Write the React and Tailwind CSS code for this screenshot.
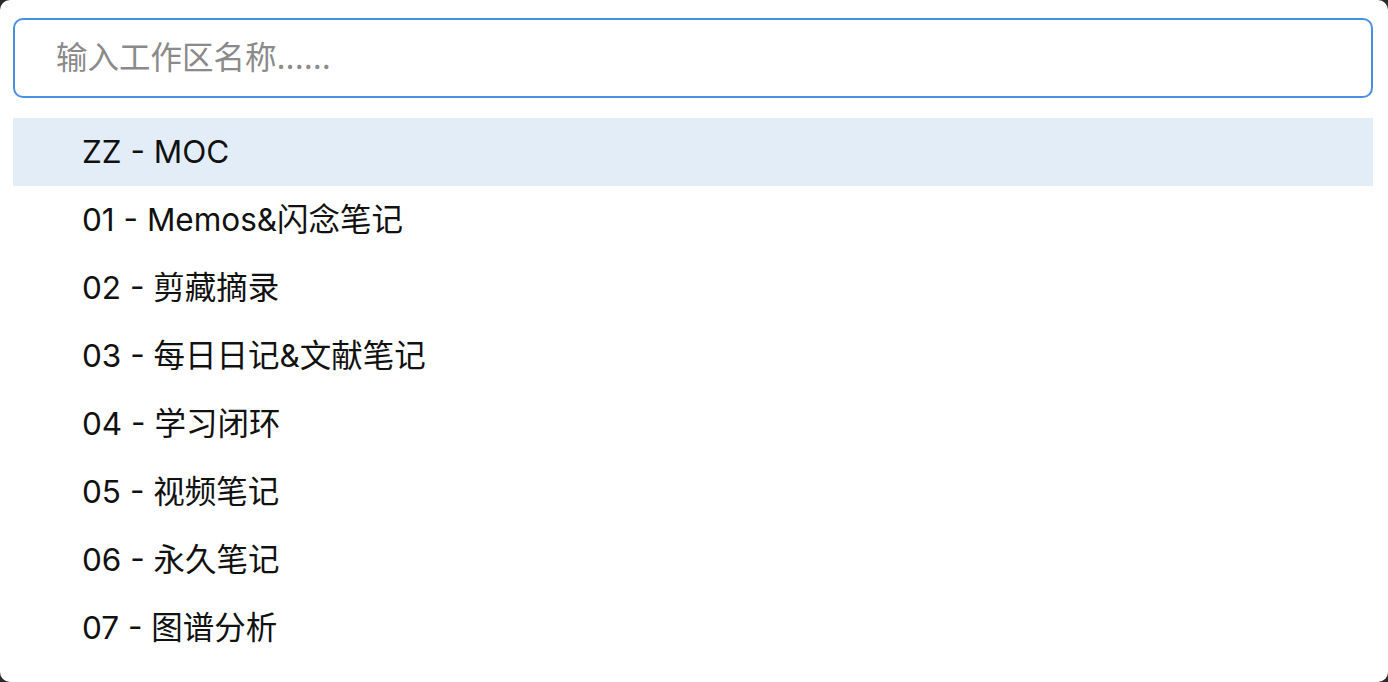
import React from 'react';

const items = [
  'ZZ - MOC',
  '01 - Memos&闪念笔记',
  '02 - 剪藏摘录',
  '03 - 每日日记&文献笔记',
  '04 - 学习闭环',
  '05 - 视频笔记',
  '06 - 永久笔记',
  '07 - 图谱分析',
];

export default function App() {
  return (
    <div className="w-[1388px] h-[682px] bg-[#2b2b2b] overflow-hidden">
      <div
        className="w-full h-full bg-white rounded-[10px] pl-[13px] pr-[15px] pt-[18px]"
        style={{ fontFamily: 'Inter, "Noto Sans CJK SC", sans-serif' }}
      >
        <div className="h-[80px] border-2 border-[#4a90e2] rounded-[10px] flex items-center pl-[41px]">
          <input
            className="w-full outline-none text-[31.5px] text-black placeholder:text-[#8a8a8a] bg-transparent"
            placeholder="输入工作区名称......"
          />
        </div>
        <ul className="mt-[20px]">
          {items.map((item, i) => (
            <li
              key={item}
              className={`h-[68px] flex items-center pl-[69px] text-[31.5px] text-[#111] ${i === 0 ? 'bg-[#e3edf8]' : ''}`}
            >
              {item}
            </li>
          ))}
        </ul>
      </div>
    </div>
  );
}
